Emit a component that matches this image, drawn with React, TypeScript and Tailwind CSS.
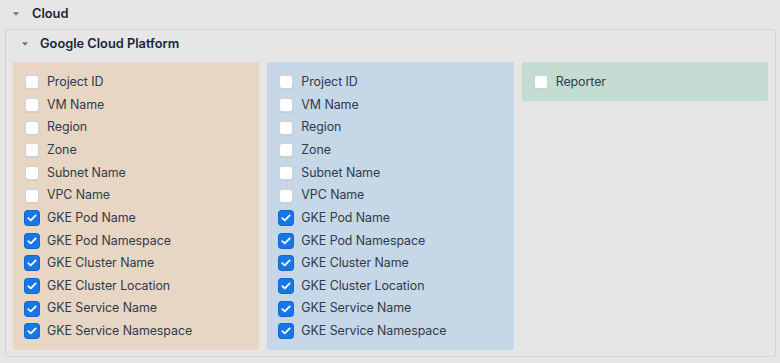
import React from "react";

const items = [
  ["Project ID", false],
  ["VM Name", false],
  ["Region", false],
  ["Zone", false],
  ["Subnet Name", false],
  ["VPC Name", false],
  ["GKE Pod Name", true],
  ["GKE Pod Namespace", true],
  ["GKE Cluster Name", true],
  ["GKE Cluster Location", true],
  ["GKE Service Name", true],
  ["GKE Service Namespace", true],
] as const;

function Caret() {
  return (
    <svg width="6" height="4" viewBox="0 0 6 4" className="shrink-0">
      <path d="M0 0.3 L6 0.3 L3 3.8 Z" fill="#6b7280" />
    </svg>
  );
}

function Box({ checked }: { checked: boolean }) {
  if (checked) {
    return (
      <span className="w-[14px] h-[14px] rounded-[3px] bg-[#1877e6] flex items-center justify-center shrink-0 shadow-[0_0_0_1px_#1466c8]">
        <svg width="10" height="8" viewBox="0 0 10 8">
          <path d="M1.3 4.1 L3.8 6.4 L8.7 1.4" fill="none" stroke="white" strokeWidth="1.8" strokeLinecap="round" strokeLinejoin="round" />
        </svg>
      </span>
    );
  }
  return (
    <span className="w-[14px] h-[14px] rounded-[3px] bg-white border border-[#cfd3d8] shadow-[0_1px_1px_rgba(0,0,0,0.06)] shrink-0" />
  );
}

function Row({ label, checked }: { label: string; checked: boolean }) {
  return (
    <div className="flex items-center h-[22.65px] pl-[12px] gap-[8px]">
      <Box checked={checked} />
      <span className="text-[12.4px] tracking-[-0.05px] text-[#2f3a4a]">{label}</span>
    </div>
  );
}

export default function App() {
  return (
    <div
      className="w-[780px] h-[363px] bg-[#e6e6e6] overflow-hidden"
      style={{ fontFamily: "Inter, 'Noto Sans', sans-serif" }}
    >
      <div className="flex items-center h-[27px] mb-[2px] pl-[13px] gap-[13px]">
        <Caret />
        <span className="text-[12.8px] font-semibold text-[#1b2536]">Cloud</span>
      </div>
      <div className="mx-[5px] w-[771px] h-[328px] border border-[#d3d3d3] rounded-[3px] bg-[#e6e6e6]">
        <div className="flex items-center h-[28px] mb-[4px] pl-[16px] gap-[12px]">
          <Caret />
          <span className="text-[12.8px] font-semibold text-[#1b2536]">Google Cloud Platform</span>
        </div>
        <div className="grid grid-cols-3 gap-[8px] px-[7px] items-start">
          <div className="bg-[#e7d6c4] rounded-[2px] pt-[9px] pb-[7px]">
            {items.map(([l, c]) => (
              <Row key={l} label={l} checked={c} />
            ))}
          </div>
          <div className="bg-[#c6d7e7] rounded-[2px] pt-[9px] pb-[7px]">
            {items.map(([l, c]) => (
              <Row key={l} label={l} checked={c} />
            ))}
          </div>
          <div className="bg-[#c5dcd3] rounded-[2px] pt-[9px] pb-[7px]">
            <Row label="Reporter" checked={false} />
          </div>
        </div>
      </div>
    </div>
  );
}
